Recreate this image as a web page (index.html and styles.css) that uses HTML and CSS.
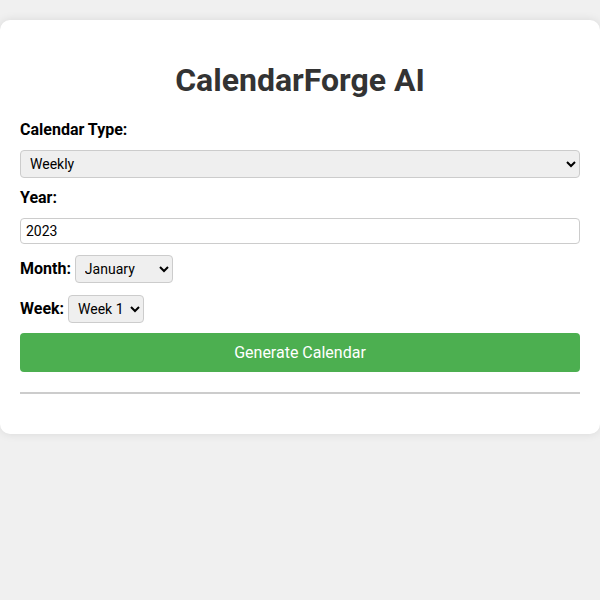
FILE: index.html
```html
<!DOCTYPE html>
<html lang="en">
<head>
    <meta charset="UTF-8">
    <meta name="viewport" content="width=device-width, initial-scale=1.0">
    <title>CalendarForge AI</title>
    <link rel="stylesheet" href="styles.css">
</head>
<body>
    <div class="container">
        <h1>CalendarForge AI</h1>
        <form id="calendar_form" onsubmit="event.preventDefault();">
            <label class="field-label" for="type">Calendar Type:</label>
            <select id="type" class="wide">
                <option>Weekly</option>
                <option>Monthly</option>
                <option>Yearly</option>
            </select>

            <label class="field-label" for="year">Year:</label>
            <input type="number" id="year" class="wide year" value="2023">

            <div class="row">
                <label for="month">Month:</label>
                <select id="month">
                    <option>January</option>
                    <option>February</option>
                    <option>September</option>
                </select>
            </div>

            <div class="row">
                <label for="week">Week:</label>
                <select id="week">
                    <option>Week 1</option>
                    <option>Week 2</option>
                    <option>Week 3</option>
                    <option>Week 4</option>
                </select>
            </div>

            <button type="submit" class="btn">Generate Calendar</button>
        </form>
        <hr>
        <div id="calendar"></div>
    </div>
</body>
</html>
```

FILE: styles.css
```css
    * {
        font-family: Roboto, 'Liberation Sans', sans-serif;
    }
    body {
        margin: 0;
        background-color: #f0f0f0;
    }

    .container {
        margin: 20px auto;
        padding: 20px;
        background-color: #fff;
        border-radius: 10px;
        box-shadow: 0 0 10px rgba(0, 0, 0, 0.1);
        max-width: 800px;
    }

    h1 {
        text-align: center;
        color: #333;
        font-size: 32px;
        margin: 21px 0;
    }

    .field-label {
        display: block;
        margin-bottom: 11px;
    }

    label {
        font-weight: bold;
        font-size: 16px;
        color: #000;
    }

    select, input {
        font-size: 14px;
        padding: 4px 5px;
        border: 1px solid #ccc;
        border-radius: 4px;
        margin-bottom: 10px;
        box-sizing: border-box;
    }

    select {
        background-color: #efefef;
    }

    .row select {
        padding-right: 3px;
    }

    .wide {
        width: 100%;
        display: block;
    }

    .year {
        margin-bottom: 11px;
    }

    .row + .row {
        margin-top: 2px;
    }

    .btn {
        display: block;
        width: 100%;
        background-color: #4caf50;
        color: white;
        padding: 10px;
        border: none;
        border-radius: 4px;
        font-size: 16px;
        cursor: pointer;
        margin-bottom: 20px;
    }

    hr {
        margin: 0;
        border: none;
        border-top: 2px solid #ccc;
    }

    #calendar {
        margin-top: 20px;
    }
```
